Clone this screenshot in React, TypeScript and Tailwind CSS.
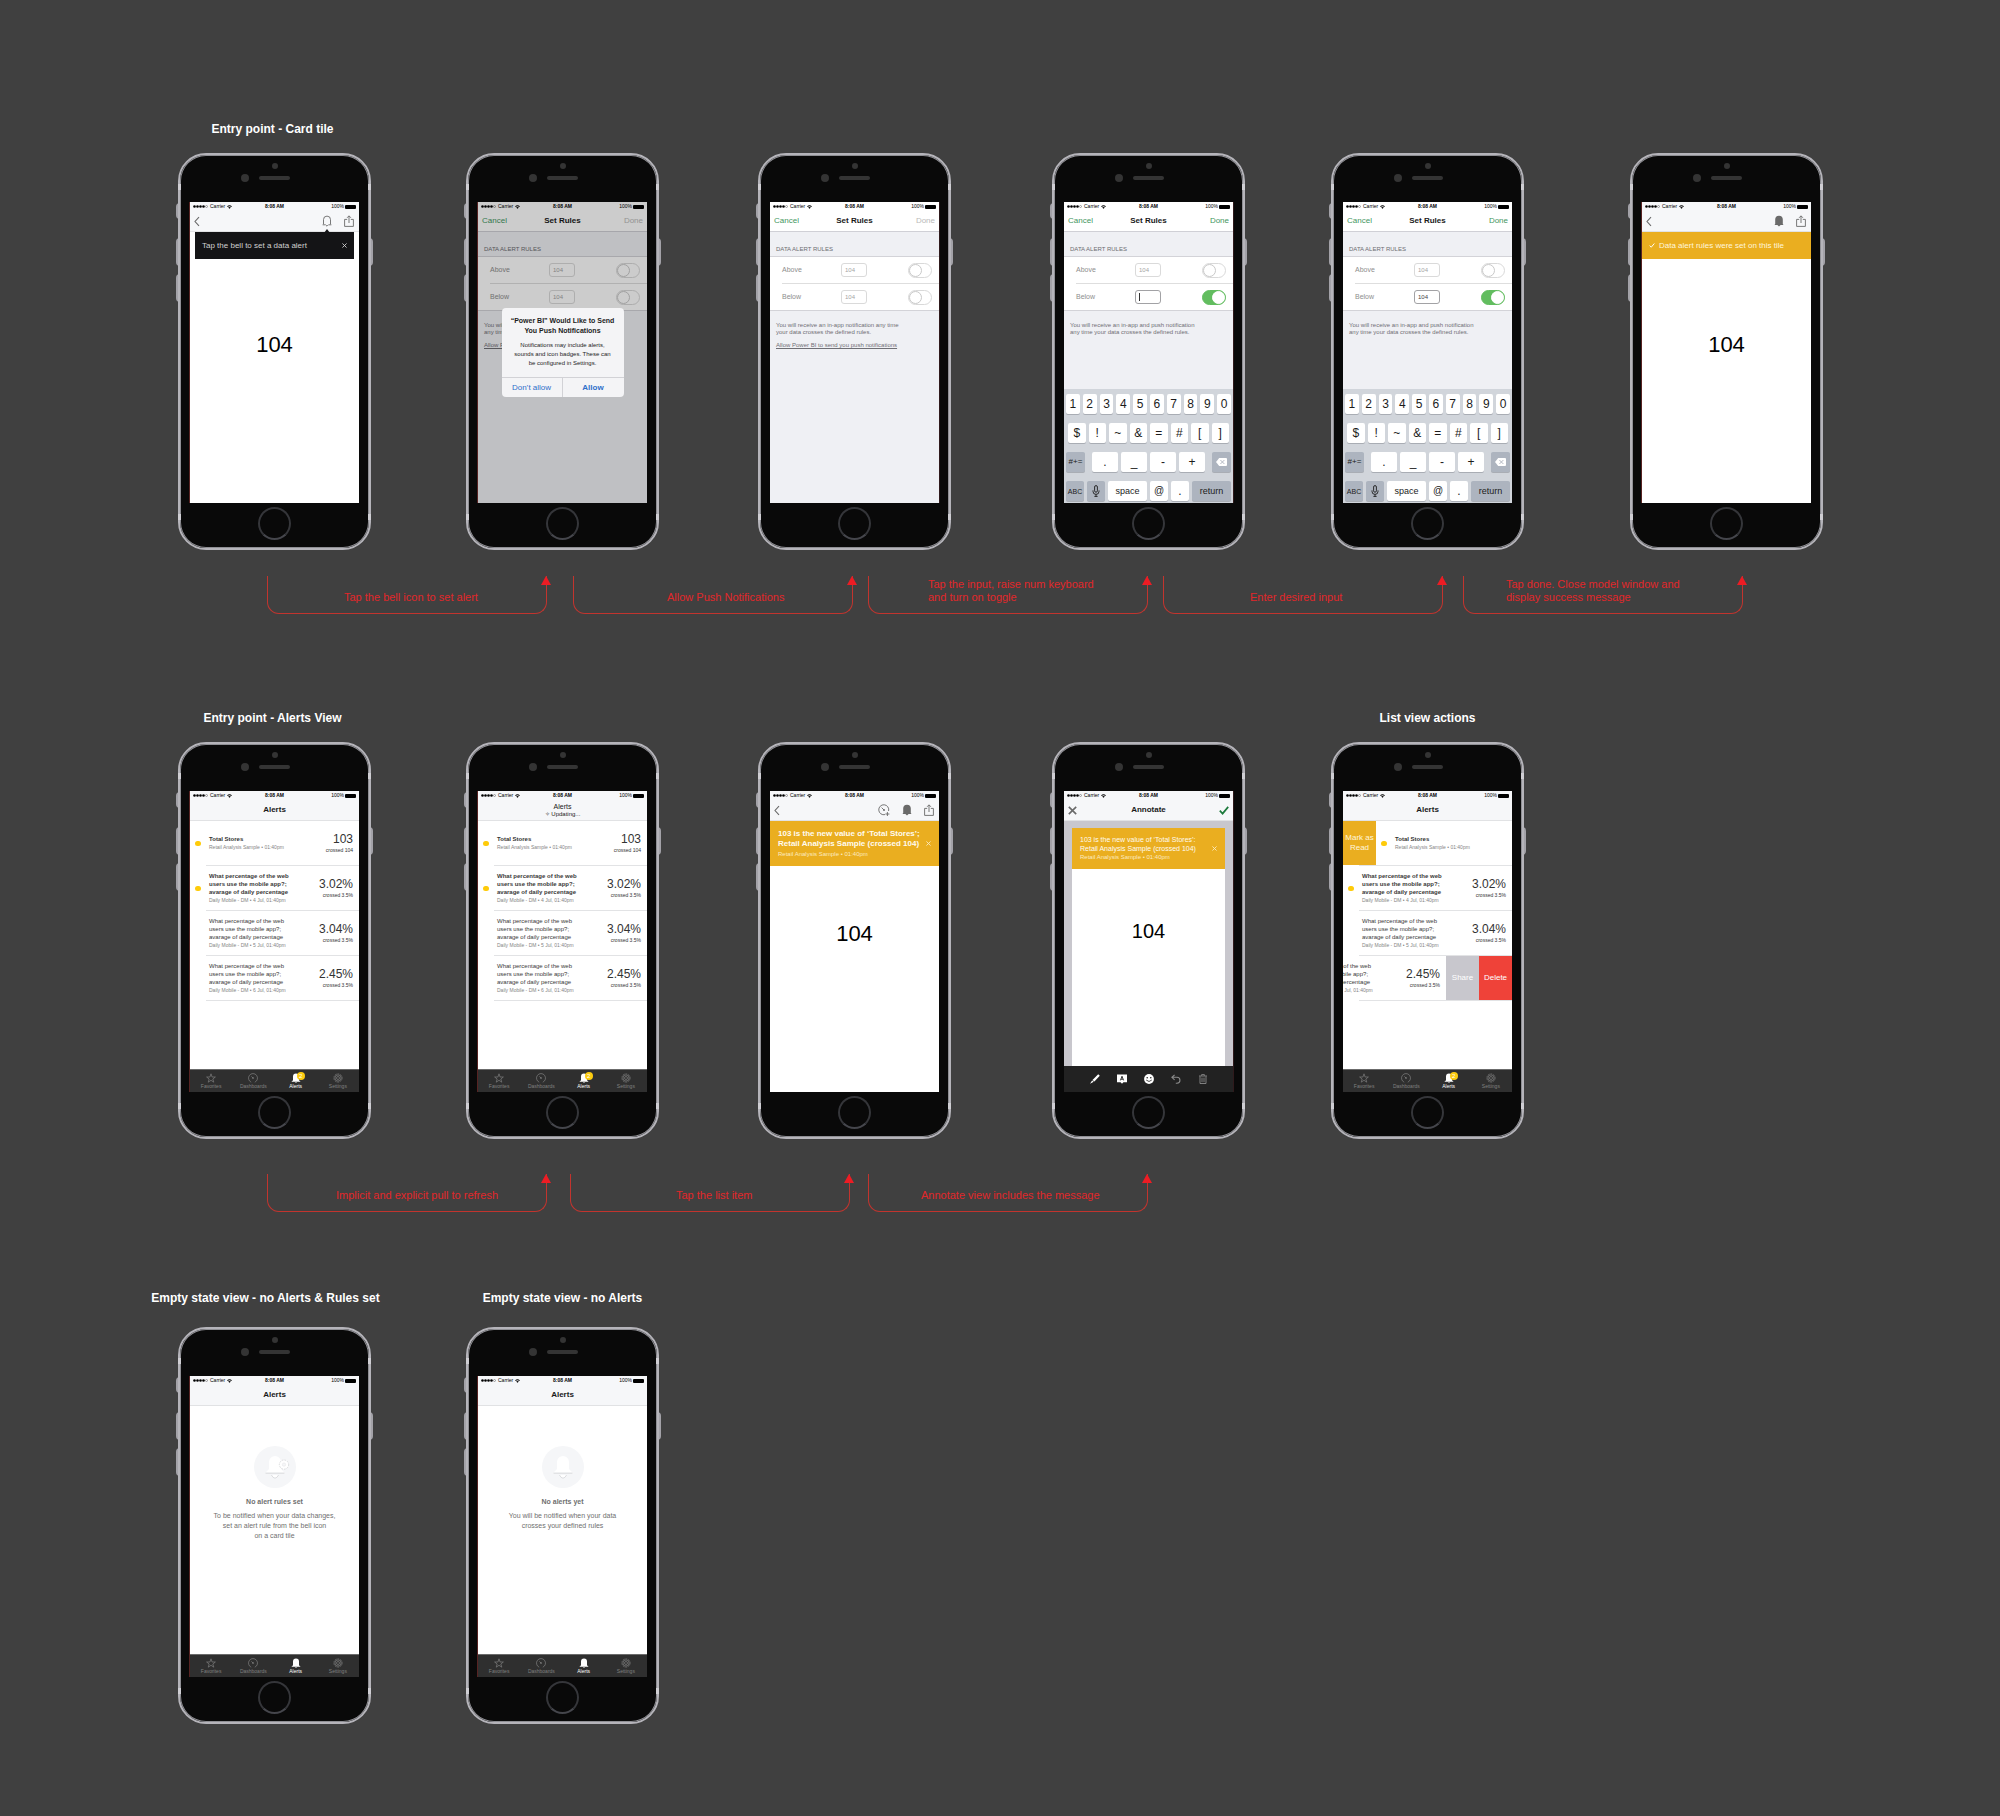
import React, { useId } from "react";

type IconProps = { className?: string };

/* ---------- icons ---------- */

const BellOutline = ({ className }: IconProps) => (
  <svg viewBox="0 0 10 12" className={className} fill="none" stroke="currentColor" strokeWidth="0.9">
    <path d="M1.5 9.2V4.6a3.5 3.5 0 0 1 7 0v4.6M0.6 9.8h2.6M9.4 9.8H6.8M3.4 9.6 5 11.2l1.6-1.6" />
  </svg>
);

const BellSolid = ({ className }: IconProps) => (
  <svg viewBox="0 0 10 12" className={className} fill="currentColor">
    <path d="M1.2 9V4.6a3.8 3.8 0 0 1 7.6 0V9l.7.9H6.6L5 11.4 3.4 9.9H.5z" />
  </svg>
);

const Share = ({ className }: IconProps) => (
  <svg viewBox="0 0 10 12" className={className} fill="none" stroke="currentColor" strokeWidth="0.9">
    <path d="M3.2 4.4H.6v7h8.8v-7H6.8M5 8V1M3.1 2.8 5 .8l1.9 2" />
  </svg>
);

const Back = ({ className }: IconProps) => (
  <svg viewBox="0 0 6 10" className={className} fill="none" stroke="currentColor" strokeWidth="1.1">
    <path d="M5 .6 1 5l4 4.4" />
  </svg>
);

const GaugePlus = ({ className }: IconProps) => (
  <svg viewBox="0 0 12 12" className={className} fill="none" stroke="currentColor" strokeWidth="0.9">
    <path d="M7 10.6A5 5 0 1 1 10.6 7M3.6 3.6 6 6M9.4 8v4M7.4 10h4" />
    <circle cx="6" cy="6" r="0.6" fill="currentColor" />
  </svg>
);

const Gauge = ({ className }: IconProps) => (
  <svg viewBox="0 0 10 10" className={className} fill="none" stroke="currentColor" strokeWidth="0.7">
    <path d="M3.2 9.2a4.5 4.5 0 1 1 3.6 0M3.4 3.4 5 5" />
    <circle cx="5" cy="5" r="0.5" fill="currentColor" />
  </svg>
);

const Star = ({ className }: IconProps) => (
  <svg viewBox="0 0 10 10" className={className} fill="none" stroke="currentColor" strokeWidth="0.7">
    <path d="M5 .8 6.1 4h3.3L6.8 6l1 3.2L5 7.3 2.2 9.2l1-3.2L.6 4h3.3z" />
  </svg>
);

const Gear = ({ className }: IconProps) => (
  <svg viewBox="0 0 10 10" className={className} fill="none" stroke="currentColor" strokeWidth="0.7">
    <circle cx="5" cy="5" r="4.1" strokeDasharray="1.9 0.7" />
    <circle cx="5" cy="5" r="3.1" />
    <circle cx="5" cy="5" r="1.5" />
  </svg>
);

const TabBell = ({ className }: IconProps) => (
  <svg viewBox="0 0 10 10" className={className} fill="currentColor">
    <path d="M2 7.3V3.6a3 3 0 0 1 6 0v3.7L9.6 8.8H.4zM3.8 9.2h2.4L5 10z" />
  </svg>
);

const Wifi = ({ className }: IconProps) => (
  <svg viewBox="0 0 6 5" className={className} fill="currentColor">
    <path d="M0 1.6Q3-.8 6 1.6L5.2 2.5Q3 .9.8 2.5zM1.3 3Q3 1.8 4.7 3L3 4.8z" />
  </svg>
);

const Tick = ({ className }: IconProps) => (
  <svg viewBox="0 0 10 9" className={className} fill="none" stroke="currentColor" strokeWidth="1.7">
    <path d="M.8 4.6 3.6 7.6 9.2.9" />
  </svg>
);

const Cross = ({ className }: IconProps) => (
  <svg viewBox="0 0 10 10" className={className} fill="none" stroke="currentColor" strokeWidth="1.8">
    <path d="m.9.9 8.2 8.2M9.1.9.9 9.1" />
  </svg>
);

const Mic = ({ className }: IconProps) => (
  <svg viewBox="0 0 8 12" className={className} fill="none" stroke="currentColor" strokeWidth="0.9">
    <rect x="2.6" y="0.6" width="2.8" height="6.6" rx="1.4" />
    <path d="M1 5.4v1a3 3 0 0 0 6 0v-1M4 9.4v2M2.4 11.4h3.2" />
  </svg>
);

const Backspace = ({ className }: IconProps) => (
  <svg viewBox="0 0 11 8" className={className}>
    <path d="M3.2 0H10a1 1 0 0 1 1 1v6a1 1 0 0 1-1 1H3.2L0 4z" fill="#fff" />
    <path d="m4.4 2 4 4M8.4 2l-4 4" stroke="#a3aab5" strokeWidth="0.8" />
  </svg>
);

const Pencil = ({ className }: IconProps) => (
  <svg viewBox="0 0 10 10" className={className} fill="currentColor">
    <path d="M8.2.3 9.8 1.7 4.4 7.4 2.5 5.9zM2.1 6.4l1.7 1.4L0 9.8z" />
  </svg>
);

const TextNote = ({ className }: IconProps) => (
  <svg viewBox="0 0 10 10" className={className}>
    <path d="M0 .4h10v7.8H6.4L5 9.8 3.6 8.2H0z" fill="currentColor" />
    <path d="M3.4 6.4 5 2.2l1.6 4.2M4 5.2h2" stroke="#222" fill="none" strokeWidth="0.9" />
  </svg>
);

const Smiley = ({ className }: IconProps) => (
  <svg viewBox="0 0 10 10" className={className}>
    <circle cx="5" cy="5" r="4.9" fill="currentColor" />
    <circle cx="3.2" cy="3.8" r="0.8" fill="#222" />
    <circle cx="6.8" cy="3.8" r="0.8" fill="#222" />
    <path d="M2.2 6q2.8 3 5.6 0" stroke="#222" strokeWidth="0.8" fill="none" />
  </svg>
);

const Undo = ({ className }: IconProps) => (
  <svg viewBox="0 0 10 10" className={className} fill="none" stroke="currentColor" strokeWidth="1.1">
    <path d="M3.6.8.9 3.3l2.7 2.5M1 3.3h5a2.9 2.9 0 0 1 0 5.9H4.8" />
  </svg>
);

const Trash = ({ className }: IconProps) => (
  <svg viewBox="0 0 10 10" className={className} fill="none" stroke="currentColor" strokeWidth="0.9">
    <path d="M1 2h8M3.6 1.8V.6h2.8v1.2M2 2.4v7.1h6V2.4M4 3.6v4.6M6 3.6v4.6" />
  </svg>
);

/* ---------- phone hardware ---------- */

type Edge = "left" | "right" | "none";

function Phone({ edge = "none", children }: { edge?: Edge; children: React.ReactNode }) {
  const edgeClass =
    edge === "left"
      ? "shadow-[-1px_0_0_#572322]"
      : edge === "right"
        ? "shadow-[1px_0_0_#2f1a1c]"
        : "";
  return (
    <div className="relative w-[193px]">
      <span className="absolute top-[50px] -left-0.5 h-4 w-1 rounded-l-sm bg-[#a3a2a8]" />
      <span className="absolute top-[85px] -left-0.5 h-7 w-1 rounded-l-sm bg-[#a3a2a8]" />
      <span className="absolute top-[121px] -left-0.5 h-7 w-1 rounded-l-sm bg-[#a3a2a8]" />
      <span className="absolute top-[85px] -right-0.5 h-7 w-1 rounded-r-sm bg-[#a3a2a8]" />
      <div className="relative flex flex-col rounded-[28px] border-2 border-[#b5b4ba] bg-[#090909] px-2.5 ring-1 ring-[#8f8f94] ring-inset">
        <div className="flex h-[47px] flex-col items-center gap-[5px] pt-2">
          <span className="size-1.5 rounded-full bg-[#343434]" />
          <span className="flex items-center gap-2.5 pr-[18px]">
            <span className="size-2 rounded-full bg-[#343434]" />
            <span className="h-1 w-[31px] rounded-full bg-[#343434]" />
          </span>
        </div>
        <div className={`flex h-[301px] flex-col overflow-hidden bg-white ${edgeClass}`}>{children}</div>
        <div className="flex h-[45px] justify-center pt-1">
          <button
            type="button"
            aria-label="Home"
            className="size-[33px] rounded-full border-2 border-[#35363a] border-b-[#45464c]"
          />
        </div>
      </div>
      <span className="absolute top-[31px] left-0 h-1.5 w-[3px] bg-[#cfced3]" />
      <span className="absolute top-[31px] right-0 h-1.5 w-[3px] bg-[#cfced3]" />
      <span className="absolute top-[361px] left-0 h-1.5 w-[3px] bg-[#cfced3]" />
      <span className="absolute top-[361px] right-0 h-1.5 w-[3px] bg-[#cfced3]" />
    </div>
  );
}

function StatusBar() {
  return (
    <div className="grid h-[9px] grid-cols-3 items-center px-[3px] text-[5px] leading-[9px] text-black">
      <span className="flex items-center gap-0.5">
        <svg viewBox="0 0 15 3" className="h-[3px] w-[15px]">
          <circle cx="1.5" cy="1.5" r="1.3" />
          <circle cx="4.5" cy="1.5" r="1.3" />
          <circle cx="7.5" cy="1.5" r="1.3" />
          <circle cx="10.5" cy="1.5" r="1.3" />
          <circle cx="13.5" cy="1.5" r="1" fill="none" stroke="#555" strokeWidth="0.5" />
        </svg>
        <span>Carrier</span>
        <Wifi className="h-1 w-[5px]" />
      </span>
      <span className="text-center font-bold">8:08 AM</span>
      <span className="flex items-center justify-end gap-px">
        <span>100%</span>
        <span className="h-1 w-[11px] rounded-[1px] bg-black" />
      </span>
    </div>
  );
}

function Header({
  tone = "gray",
  left,
  title,
  right,
}: {
  tone?: "gray" | "white";
  left?: React.ReactNode;
  title?: React.ReactNode;
  right?: React.ReactNode;
}) {
  return (
    <div
      className={`shrink-0 border-b ${tone === "gray" ? "border-[#e1e2e4] bg-[#f6f7f9]" : "border-[#d0d0d6] bg-white"}`}
    >
      <StatusBar />
      <div className="grid h-5 grid-cols-[1fr_auto_1fr] items-center px-1 text-[8px] leading-[10px] text-[#6a6a6a]">
        <div className="flex">{left}</div>
        <div className="text-center font-bold text-[#1a1a1a]">{title}</div>
        <div className="flex justify-end gap-3">{right}</div>
      </div>
    </div>
  );
}

const BackButton = () => (
  <button type="button" aria-label="Back">
    <Back className="h-[11px] w-[6px]" />
  </button>
);

const ShareButton = () => (
  <button type="button" aria-label="Share" className="pr-px">
    <Share className="h-3 w-2.5" />
  </button>
);

const BigNumber = () => <p className="text-center text-[22px] leading-6 text-black">104</p>;

/* ---------- tile screens ---------- */

function TileTooltip() {
  return (
    <>
      <Header
        left={<BackButton />}
        right={
          <>
            <button type="button" aria-label="Alerts" className="relative">
              <BellOutline className="h-3 w-2.5" />
              <svg viewBox="0 0 6 4" className="absolute top-3.5 left-0.5 h-1 w-1.5" fill="#141416">
                <path d="M0 4 3 0l3 4z" />
              </svg>
            </button>
            <ShareButton />
          </>
        }
      />
      <div className="mx-[5px] flex h-[27px] items-center justify-between bg-[#141416] px-[7px] text-[8px] text-[#d0d0d0]">
        <span>Tap the bell to set a data alert</span>
        <button type="button" aria-label="Dismiss">
          <Cross className="size-[5px]" />
        </button>
      </div>
      <div className="pt-[74px]">
        <BigNumber />
      </div>
    </>
  );
}

function TileSuccess() {
  return (
    <>
      <Header
        left={<BackButton />}
        right={
          <>
            <button type="button" aria-label="Alerts">
              <BellSolid className="h-3 w-2.5" />
            </button>
            <ShareButton />
          </>
        }
      />
      <div className="flex h-[27px] items-center gap-1 bg-[#eaae20] px-[7px] text-[8px] whitespace-nowrap text-[#fff6dc]">
        <Tick className="h-[5px] w-1.5 text-white" />
        <span>Data alert rules were set on this tile</span>
      </div>
      <div className="pt-[74px]">
        <BigNumber />
      </div>
    </>
  );
}

function TileAlert() {
  return (
    <>
      <Header
        left={<BackButton />}
        right={
          <>
            <button type="button" aria-label="Pin to dashboard">
              <GaugePlus className="h-3 w-3" />
            </button>
            <button type="button" aria-label="Alerts">
              <BellSolid className="h-3 w-2.5" />
            </button>
            <ShareButton />
          </>
        }
      />
      <div className="flex h-[45px] items-center justify-between bg-[#eaae20] px-2 text-[#fffbf0]">
        <div className="whitespace-nowrap">
          <p className="text-[8px] leading-[10px] font-bold">103 is the new value of ‘Total Stores’;</p>
          <p className="text-[8px] leading-[10px] font-bold">Retail Analysis Sample (crossed 104)</p>
          <p className="text-[6px] leading-[10px] text-[#fbeac0]">Retail Analysis Sample • 01:40pm</p>
        </div>
        <button type="button" aria-label="Dismiss">
          <Cross className="size-[5px] text-[#fbeac0]" />
        </button>
      </div>
      <div className="pt-14">
        <BigNumber />
      </div>
    </>
  );
}

function Annotate() {
  return (
    <>
      <Header
        left={
          <button type="button" aria-label="Close">
            <Cross className="size-[9px]" />
          </button>
        }
        title="Annotate"
        right={
          <button type="button" aria-label="Done">
            <Tick className="h-[9px] w-2.5 text-[#1c7a3c]" />
          </button>
        }
      />
      <div className="flex-1 bg-[#c8c7cd] px-2 pt-[7px]">
        <div className="h-full bg-white">
          <div className="flex h-[41px] items-center justify-between bg-[#eaae20] px-2 text-[#fffbf0]">
            <div className="whitespace-nowrap">
              <p className="text-[7px] leading-[9px]">103 is the new value of ‘Total Stores’:</p>
              <p className="text-[7px] leading-[9px]">Retail Analysis Sample (crossed 104)</p>
              <p className="text-[6px] leading-[9px] text-[#fbeac0]">Retail Analysis Sample • 01:40pm</p>
            </div>
            <button type="button" aria-label="Dismiss">
              <Cross className="size-[5px] text-[#fbeac0]" />
            </button>
          </div>
          <p className="pt-[50px] text-center text-[20px] leading-6 text-black">104</p>
        </div>
      </div>
      <div className="flex h-[26px] shrink-0 items-center justify-center gap-[17px] bg-[#222222] text-white">
        <button type="button" aria-label="Draw">
          <Pencil className="size-2.5" />
        </button>
        <button type="button" aria-label="Add text">
          <TextNote className="size-2.5" />
        </button>
        <button type="button" aria-label="Add smiley">
          <Smiley className="size-2.5" />
        </button>
        <button type="button" aria-label="Undo" className="text-[#8b8b8b]">
          <Undo className="size-2.5" />
        </button>
        <button type="button" aria-label="Delete" className="text-[#8b8b8b]">
          <Trash className="size-2.5" />
        </button>
      </div>
    </>
  );
}

/* ---------- rules screens ---------- */

function RuleRow({ label, value, on = false, caret = false }: { label: string; value: string; on?: boolean; caret?: boolean }) {
  const id = useId();
  return (
    <div className="flex h-[26px] items-center pr-[7px]">
      <label htmlFor={id} className="w-[59px] text-[7px] text-[#8e8e8e]">
        {label}
      </label>
      <span className="relative">
        <input
          id={id}
          defaultValue={value}
          className={`block h-3.5 w-[26px] rounded-[3px] border bg-white pl-[3px] text-[6px] ${on ? "border-[#a2a2a5] text-[#444]" : "border-[#dadada] text-[#a5a5a5]"}`}
        />
        {caret && <span className="absolute top-[3px] left-1 h-2 w-px bg-[#333]" />}
      </span>
      <input
        type="checkbox"
        defaultChecked={on}
        aria-label={`${label} rule enabled`}
        className="ml-auto h-[15px] w-6 appearance-none rounded-full border border-[#d9d9d9] bg-white before:block before:size-[13px] before:rounded-full before:border before:border-[#c9c9c9] before:bg-white checked:border-[#62bd5f] checked:bg-[#62bd5f] checked:before:ml-[9px] checked:before:border-white"
      />
    </div>
  );
}

function Rules({
  doneActive = false,
  below = "104",
  on = false,
  caret = false,
  lines,
  link = false,
}: {
  doneActive?: boolean;
  below?: string;
  on?: boolean;
  caret?: boolean;
  lines: string[];
  link?: boolean;
}) {
  return (
    <div className="flex flex-1 flex-col bg-[#eff0f4]">
      <Header
        tone="white"
        left={
          <button type="button" className="text-[#3f9660]">
            Cancel
          </button>
        }
        title="Set Rules"
        right={
          <button type="button" className={doneActive ? "text-[#3f9660]" : "text-[#b9b9b9]"}>
            Done
          </button>
        }
      />
      <h3 className="flex h-6 items-end px-1.5 pb-[3px] text-[6px] leading-[8px] text-[#6d6d72]">DATA ALERT RULES</h3>
      <div className="border-y border-[#d3d3d8] bg-white pl-3">
        <RuleRow label="Above" value="104" />
        <div className="border-t border-[#dedede]" />
        <RuleRow label="Below" value={below} on={on} caret={caret} />
      </div>
      <div className="px-1.5 pt-[11px] text-[6px] leading-[7px] whitespace-nowrap text-[#6f6f75]">
        {lines.map((line) => (
          <p key={line}>{line}</p>
        ))}
        {link && (
          <a href="#push" className="mt-1.5 block underline">
            Allow Power BI to send you push notifications
          </a>
        )}
      </div>
    </div>
  );
}

function Key({ children, dark = false, className = "", label }: { children: React.ReactNode; dark?: boolean; className?: string; label?: string }) {
  return (
    <button
      type="button"
      aria-label={label}
      className={`flex h-5 items-center justify-center rounded-[2px] leading-none shadow-[0_1px_0_#a9adb4] ${dark ? "bg-[#adb4bf]" : "bg-white"} ${className}`}
    >
      {children}
    </button>
  );
}

function Keyboard() {
  return (
    <div className="flex h-[114px] shrink-0 flex-col gap-[9px] bg-[#d1d5db] pt-[5px] text-[12px] text-[#1c1c1c]">
      <div className="grid grid-cols-10 gap-[3px] px-0.5">
        {"1234567890".split("").map((k) => (
          <Key key={k}>{k}</Key>
        ))}
      </div>
      <div className="grid grid-cols-8 gap-[3px] px-1">
        {"$!~&=#[]".split("").map((k) => (
          <Key key={k}>{k}</Key>
        ))}
      </div>
      <div className="flex justify-between px-0.5">
        <Key dark className="w-[19px] text-[8px]">
          #+=
        </Key>
        <div className="flex gap-[3px]">
          {[".", "_", "-", "+"].map((k) => (
            <Key key={k} className="w-[26px]">
              {k}
            </Key>
          ))}
        </div>
        <Key dark className="w-[19px]" label="Backspace">
          <Backspace className="h-2 w-[11px]" />
        </Key>
      </div>
      <div className="flex justify-between px-0.5">
        <Key dark className="w-[18px] text-[7px]">
          ABC
        </Key>
        <Key dark className="w-[18px]" label="Dictate">
          <Mic className="h-3 w-2" />
        </Key>
        <Key className="w-[39px] text-[9px]">space</Key>
        <Key className="w-[18px] text-[10px]">@</Key>
        <Key className="w-[18px]">.</Key>
        <Key dark className="w-[39px] text-[9px]">
          return
        </Key>
      </div>
    </div>
  );
}

const inAppLines = ["You will receive an in-app notification any time", "your data crosses the defined rules."];
const pushLines = ["You will receive an in-app and push notification", "any time your data crosses the defined rules."];

function RulesWithPrompt() {
  return (
    <div className="relative flex flex-1 flex-col">
      <Rules lines={["You will receive an in-app notification", "any time your data crosses the defined rules."]} link />
      <div className="absolute inset-0 flex flex-col items-center bg-black/20 pt-[106px]">
        <div role="dialog" aria-label="Push notifications" className="w-[122px] rounded-[4px] bg-[#f4f4f6] text-center whitespace-nowrap text-[#1c1c1c]">
          <div className="h-[70px] border-b border-[#d2d2d6] pt-2">
            <p className="text-[7px] leading-[10px] font-bold">“Power BI” Would Like to Send</p>
            <p className="text-[7px] leading-[10px] font-bold">You Push Notifications</p>
            <div className="pt-[5px] text-[6px] leading-[9px]">
              <p>Notifications may include alerts,</p>
              <p>sounds and icon badges. These can</p>
              <p>be configured in Settings.</p>
            </div>
          </div>
          <div className="grid h-[19px] grid-cols-2 divide-x divide-[#d2d2d6] text-[8px] text-[#2f6fca]">
            <button type="button">Don’t allow</button>
            <button type="button" className="font-bold">
              Allow
            </button>
          </div>
        </div>
      </div>
    </div>
  );
}

/* ---------- alert list screens ---------- */

function TabBar({ badge = false }: { badge?: boolean }) {
  return (
    <nav className="mt-auto grid h-[23px] shrink-0 grid-cols-4 border-t border-[#6b6b6b] bg-[#2f2f2f] pt-[3px] text-[5px] leading-[7px] text-[#808080]">
      <a href="#favorites" className="flex flex-col items-center">
        <Star className="size-2.5" />
        Favorites
      </a>
      <a href="#dashboards" className="flex flex-col items-center">
        <Gauge className="size-2.5" />
        Dashboards
      </a>
      <a href="#alerts" className="flex flex-col items-center text-white">
        <span className="relative">
          <TabBell className="size-2.5" />
          {badge && (
            <span className="absolute -top-px left-1.5 flex size-2 items-center justify-center rounded-full bg-[#fccb10] text-[6px] leading-none">
              2
            </span>
          )}
        </span>
        Alerts
      </a>
      <a href="#settings" className="flex flex-col items-center">
        <Gear className="size-2.5" />
        Settings
      </a>
    </nav>
  );
}

function Dot({ show }: { show: boolean }) {
  return (
    <span className="flex w-[19px] shrink-0 pl-[5px]">
      {show && <span className="h-[5px] w-1.5 rounded-full bg-[#fecb0a]" />}
    </span>
  );
}

function StoreSummary() {
  return (
    <div className="grow whitespace-nowrap">
      <p className="text-[6px] leading-[8px] font-bold text-[#333]">Total Stores</p>
      <p className="text-[5px] leading-[8px] text-[#858585]">Retail Analysis Sample • 01:40pm</p>
    </div>
  );
}

function Reading({ value, note }: { value: string; note: string }) {
  return (
    <div className="shrink-0 pr-1.5 text-right text-[#333]">
      <p className="text-[12px] leading-[13px]">{value}</p>
      <p className="text-[5px] leading-[8px]">{note}</p>
    </div>
  );
}

type WebAlert = { day: string; value: string; unread?: boolean };

function WebSummary({ alert }: { alert: WebAlert }) {
  return (
    <>
      <Dot show={!!alert.unread} />
      <div className="grow whitespace-nowrap">
        <p className={`text-[6px] leading-[8px] text-[#3a3a3a] ${alert.unread ? "font-bold" : ""}`}>
          What percentage of the web
          <br />
          users use the mobile app?;
          <br />
          avarage of daily percentage
        </p>
        <p className="text-[5px] leading-[8px] text-[#858585]">Daily Mobile - DM • {alert.day} Jul, 01:40pm</p>
      </div>
      <Reading value={alert.value} note="crossed 3.5%" />
    </>
  );
}

const webAlerts: WebAlert[] = [
  { day: "4", value: "3.02%", unread: true },
  { day: "5", value: "3.04%" },
  { day: "6", value: "2.45%" },
];

const Divider = () => <div className="ml-4 h-px shrink-0 bg-[#e2e3e5]" />;

function AlertsList({ title, swipe = false }: { title: React.ReactNode; swipe?: boolean }) {
  return (
    <>
      <Header title={title} />
      <ul className="flex flex-col">
        <li>
          <div className="flex h-11 items-center overflow-hidden">
            {swipe && (
              <button type="button" className="h-full w-[33px] shrink-0 bg-[#eaae20] text-[8px] leading-[10px] text-[#fff6dc]">
                Mark as Read
              </button>
            )}
            <Dot show />
            <StoreSummary />
            {!swipe && <Reading value="103" note="crossed 104" />}
          </div>
          <Divider />
        </li>
        {webAlerts.map((alert, i) => {
          const open = swipe && i === webAlerts.length - 1;
          return (
            <li key={alert.value}>
              <div className="flex h-11 overflow-hidden">
                <div className={open ? "-ml-[66px] flex w-full shrink-0 items-center" : "flex w-full items-center"}>
                  <WebSummary alert={alert} />
                </div>
                {open && (
                  <>
                    <button type="button" className="w-[33px] shrink-0 bg-[#c8c7cd] text-[8px] text-white">
                      Share
                    </button>
                    <button type="button" className="w-[33px] shrink-0 bg-[#ef4239] text-[8px] text-white">
                      Delete
                    </button>
                  </>
                )}
              </div>
              <Divider />
            </li>
          );
        })}
      </ul>
      <TabBar badge />
    </>
  );
}

const UpdatingTitle = () => (
  <>
    <span className="block text-[7px] leading-[8px] font-normal">Alerts</span>
    <span className="block text-[6px] leading-[7px] font-normal">✧ Updating...</span>
  </>
);

function EmptyAlerts({ heading, lines, gear = false }: { heading: string; lines: string[]; gear?: boolean }) {
  return (
    <>
      <Header title="Alerts" />
      <div className="flex flex-col items-center pt-10 text-center whitespace-nowrap text-[#6f6f6f]">
        <svg viewBox="0 0 42 42" className="size-[42px]">
          <circle cx="21" cy="21" r="21" fill="#f5f6f8" />
          <path d="M15 23v-7a6 6 0 0 1 12 0v7l3.4 3.6H11.6z" fill="#fff" />
          <path d="M11.6 27.2h18.8" stroke="#d2d3d5" strokeWidth="0.8" />
          <path d="M17.4 29q3.6 6.4 7.2 0z" fill="#fff" />
          <path d="M17.4 29q3.6 6.4 7.2 0" stroke="#cfd0d2" strokeWidth="0.7" fill="none" />
          {gear && (
            <>
              <circle cx="30" cy="18.6" r="4.6" fill="#fff" stroke="#dadbdd" strokeWidth="1" strokeDasharray="1.6 1.1" />
              <circle cx="30" cy="18.6" r="1.7" fill="#f5f6f8" stroke="#e2e3e5" strokeWidth="0.5" />
            </>
          )}
        </svg>
        <h3 className="pt-[9px] text-[7px] leading-[10px] font-bold">{heading}</h3>
        <p className="pt-1 text-[7px] leading-[10px]">
          {lines.map((line) => (
            <span key={line} className="block">
              {line}
            </span>
          ))}
        </p>
      </div>
      <TabBar />
    </>
  );
}

/* ---------- flow board ---------- */

function Step({ title, className = "pb-4", edge, children }: { title?: string; className?: string; edge?: Edge; children: React.ReactNode }) {
  return (
    <section className="flex w-[193px] flex-col items-center">
      <h2 className={`min-h-8 text-[12px] leading-4 font-bold whitespace-nowrap text-white ${className}`}>{title}</h2>
      <Phone edge={edge}>{children}</Phone>
    </section>
  );
}

function Connector({ lines, className }: { lines: string[]; className: string }) {
  return (
    <div
      className={`relative flex h-[38px] w-[280px] flex-col justify-end rounded-b-[12px] border-x border-b border-[#c2342e] pb-[9px] text-[11px] leading-[13px] whitespace-nowrap text-[#e2272a] ${className}`}
    >
      {lines.map((line) => (
        <p key={line}>{line}</p>
      ))}
      <svg viewBox="0 0 10 9" className="absolute top-0 -right-[5px] h-[9px] w-2.5" fill="#ed1c24">
        <path d="M5 0 10 9H0z" />
      </svg>
    </div>
  );
}

export default function App() {
  return (
    <main className="min-h-screen bg-[#404040] pt-[121px] pb-[92px] font-['Liberation_Sans',Arial,sans-serif]">
      <div className="grid grid-cols-[288fr_292fr_294fr_279fr_299fr_193px] pr-[177px] pl-[178px]">
        <Step title="Entry point - Card tile" className="pr-1 pb-4" edge="left">
          <TileTooltip />
        </Step>
        <Step edge="left">
          <RulesWithPrompt />
        </Step>
        <Step edge="right">
          <Rules lines={inAppLines} link />
        </Step>
        <Step edge="right">
          <Rules doneActive below="" on caret lines={pushLines} />
          <Keyboard />
        </Step>
        <Step>
          <Rules doneActive on lines={pushLines} />
          <Keyboard />
        </Step>
        <Step edge="left">
          <TileSuccess />
        </Step>
      </div>

      <div className="grid grid-cols-[306fr_295fr_295fr_300fr_280px] pt-[26px] pr-[257px] pl-[267px]">
        <Connector className="pl-[76px]" lines={["Tap the bell icon to set alert"]} />
        <Connector className="pl-[93px]" lines={["Allow Push Notifications"]} />
        <Connector className="pl-[59px]" lines={["Tap the input, raise num keyboard", "and turn on toggle"]} />
        <Connector className="pl-[86px]" lines={["Enter desired input"]} />
        <Connector className="pl-[42px]" lines={["Tap done. Close model window and", "display success message"]} />
      </div>

      <div className="grid grid-cols-[288fr_292fr_294fr_279fr_299fr_193px] pt-24 pr-[177px] pl-[178px]">
        <Step title="Entry point - Alerts View" className="pr-1 pb-4" edge="left">
          <AlertsList title="Alerts" />
        </Step>
        <Step edge="left">
          <AlertsList title={<UpdatingTitle />} />
        </Step>
        <Step>
          <TileAlert />
        </Step>
        <Step edge="right">
          <Annotate />
        </Step>
        <Step title="List view actions">
          <AlertsList title="Alerts" swipe />
        </Step>
      </div>

      <div className="grid grid-cols-[303fr_298fr_875fr] pt-[35px] pr-[257px] pl-[267px]">
        <Connector className="pl-[68px]" lines={["Implicit and explicit pull to refresh"]} />
        <Connector className="pl-[105px]" lines={["Tap the list item"]} />
        <Connector className="pl-[52px]" lines={["Annotate view includes the message"]} />
      </div>

      <div className="grid grid-cols-[288fr_292fr_294fr_279fr_299fr_193px] pt-[78px] pr-[177px] pl-[178px]">
        <Step title="Empty state view - no Alerts & Rules set" className="pr-[18px] pb-[21px]" edge="left">
          <EmptyAlerts
            gear
            heading="No alert rules set"
            lines={["To be notified when your data changes,", "set an alert rule from the bell icon", "on a card tile"]}
          />
        </Step>
        <Step title="Empty state view - no Alerts" className="pb-[21px]" edge="left">
          <EmptyAlerts heading="No alerts yet" lines={["You will be notified when your data", "crosses your defined rules"]} />
        </Step>
      </div>
    </main>
  );
}
